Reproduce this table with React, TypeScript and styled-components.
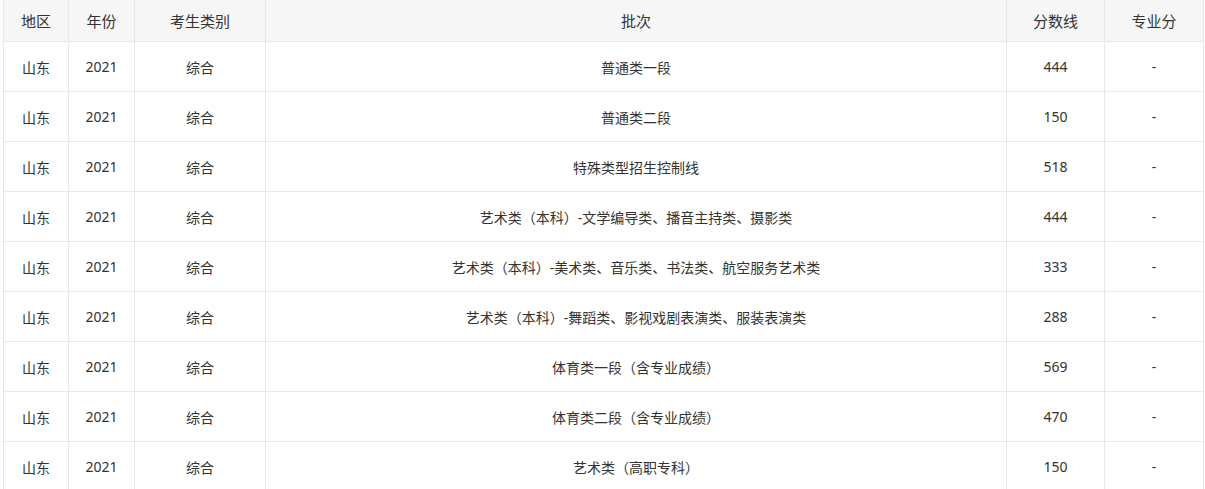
import React from "react";
import styled, { createGlobalStyle } from "styled-components";

const GlobalStyle = createGlobalStyle`
    body {
        margin: 0;
        background: #fff;
        font-family: "Noto Sans", "Noto Sans CJK SC", sans-serif;
    }
`;

type Row = {
    area: string;
    year: string;
    kind: string;
    batch: string;
    score: string;
    major: string;
};

const rows: Row[] = [
    {area: "山东", year: "2021", kind: "综合", batch: "普通类一段", score: "444", major: "-"},
    {area: "山东", year: "2021", kind: "综合", batch: "普通类二段", score: "150", major: "-"},
    {area: "山东", year: "2021", kind: "综合", batch: "特殊类型招生控制线", score: "518", major: "-"},
    {area: "山东", year: "2021", kind: "综合", batch: "艺术类（本科）-文学编导类、播音主持类、摄影类", score: "444", major: "-"},
    {area: "山东", year: "2021", kind: "综合", batch: "艺术类（本科）-美术类、音乐类、书法类、航空服务艺术类", score: "333", major: "-"},
    {area: "山东", year: "2021", kind: "综合", batch: "艺术类（本科）-舞蹈类、影视戏剧表演类、服装表演类", score: "288", major: "-"},
    {area: "山东", year: "2021", kind: "综合", batch: "体育类一段（含专业成绩）", score: "569", major: "-"},
    {area: "山东", year: "2021", kind: "综合", batch: "体育类二段（含专业成绩）", score: "470", major: "-"},
    {area: "山东", year: "2021", kind: "综合", batch: "艺术类（高职专科）", score: "150", major: "-"},
];

const widths = [65, 66, 131, 741, 98, 99];

export default function App() {
    return (
        <Page>
            <GlobalStyle/>
            <ScoreTable>
                <colgroup>
                    {widths.map((w, i) => <col key={i} style={{width: w}}/>)}
                </colgroup>
                <thead>
                    <tr>
                        <HeadCell>地区</HeadCell>
                        <HeadCell>年份</HeadCell>
                        <HeadCell>考生类别</HeadCell>
                        <HeadCell>批次</HeadCell>
                        <HeadCell>分数线</HeadCell>
                        <HeadCell>专业分</HeadCell>
                    </tr>
                </thead>
                <tbody>
                    {rows.map((r, i) => (
                        <tr key={i}>
                            <Cell>{r.area}</Cell>
                            <Cell>{r.year}</Cell>
                            <Cell>{r.kind}</Cell>
                            <Cell>{r.batch}</Cell>
                            <Cell>{r.score}</Cell>
                            <Cell>{r.major}</Cell>
                        </tr>
                    ))}
                </tbody>
            </ScoreTable>
        </Page>
    )
}

const Page = styled.div`
    padding: 0 2px 0 3px;
    margin-top: -1px;
`;

const ScoreTable = styled.table`
    width: 1200px;
    border-collapse: collapse;
    table-layout: fixed;
`;

const HeadCell = styled.th`
    height: 41px;
    padding: 0;
    background: #f6f6f6;
    border: 1px solid #e8e8e8;
    color: #333;
    font-size: 15px;
    font-weight: 400;
    text-align: center;
`;

const Cell = styled.td`
    height: 49px;
    padding: 0;
    border: 1px solid #e8e8e8;
    color: #333;
    font-size: 14px;
    text-align: center;
`;
